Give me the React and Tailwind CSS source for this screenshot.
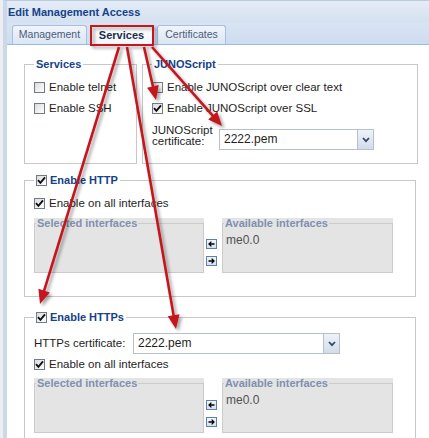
import React from "react";

function Check({ checked }) {
  return (
    <span className="w-[11px] h-[11px] shrink-0 border border-[#707b87] bg-gradient-to-br from-[#dcdcdc] to-white flex items-center justify-center">
      {checked && (
        <svg width="9" height="9" viewBox="0 0 9 9">
          <path d="M1 4.2 L3.4 6.8 L8 1.4" stroke="#111" strokeWidth="1.9" fill="none" />
        </svg>
      )}
    </span>
  );
}

function CheckRow({ checked, label }) {
  return (
    <div className="h-[21px] flex items-center gap-[4px]">
      <Check checked={checked} />
      <span className="text-[11.5px] text-[#1e1e1e] whitespace-nowrap">{label}</span>
    </div>
  );
}

function Select({ width, value }) {
  return (
    <div className={`flex h-[21px] border border-[#b5bfce] bg-white ${width}`}>
      <span className="flex-1 pl-[4px] text-[12px] leading-[19px] text-[#1e1e1e]">{value}</span>
      <span className="w-[16px] border-l border-[#b5bfce] bg-gradient-to-b from-[#eef3f9] to-[#d3dcea] flex items-center justify-center">
        <svg width="8" height="6" viewBox="0 0 8 6">
          <path d="M1 1 L4 4.2 L7 1" stroke="#2f4669" strokeWidth="1.7" fill="none" />
        </svg>
      </span>
    </div>
  );
}

function MoveButton({ dir }) {
  return (
    <span className="w-[11px] h-[10px] border border-[#5f7fae] bg-gradient-to-b from-[#f1f5fb] to-[#d5e1f0] flex items-center justify-center">
      <svg width="7" height="6" viewBox="0 0 7 6">
        {dir === "left" ? (
          <path d="M6.5 3 H1 M3.4 0.6 L1 3 L3.4 5.4" stroke="#000" strokeWidth="1.3" fill="none" />
        ) : (
          <path d="M0.5 3 H6 M3.6 0.6 L6 3 L3.6 5.4" stroke="#000" strokeWidth="1.3" fill="none" />
        )}
      </svg>
    </span>
  );
}

function IfaceBox({ title, items, width }) {
  return (
    <div className={`bg-[#e4e4e4] h-[55px] flex ${width}`}>
      <fieldset className="flex-1 min-w-0 border border-[#cbcbcb]">
        <legend className="ml-[1px] px-[1px] text-[11px] font-bold text-[#8091b0] leading-[11px] whitespace-nowrap">
          {title}
        </legend>
        {items.map((it) => (
          <div key={it} className="pl-[3px] pt-[4px] text-[12px] leading-[14px] text-[#505050]">
            {it}
          </div>
        ))}
      </fieldset>
    </div>
  );
}

function InterfacePicker({ padTop }) {
  return (
    <div className="flex">
      <IfaceBox title="Selected interfaces" items={[]} width="w-[170px]" />
      <div className={`ml-[2px] flex flex-col gap-[7px] ${padTop}`}>
        <MoveButton dir="left" />
        <MoveButton dir="right" />
      </div>
      <div className="ml-[5px]">
        <IfaceBox title="Available interfaces" items={["me0.0"]} width="w-[171px]" />
      </div>
    </div>
  );
}

function Legend({ children, checked }) {
  return (
    <legend className="ml-[9px] px-[2px] leading-[14px]">
      <span className="flex items-center gap-[3px]">
        {checked !== undefined && <Check checked={checked} />}
        <span className="text-[11px] font-bold text-[#15428b] whitespace-nowrap">{children}</span>
      </span>
    </legend>
  );
}

// Annotation arrows drawn on top of the dialog
const ARROWS = [
  [119, 47, 40, 304],
  [127, 47, 176, 329],
  [144, 47, 156, 100],
  [152, 47, 222, 126],
];

function Arrow({ x1, y1, x2, y2 }) {
  const dx = x2 - x1;
  const dy = y2 - y1;
  const len = Math.hypot(dx, dy);
  const ux = dx / len;
  const uy = dy / len;
  const hl = 14;
  const hw = 6;
  const bx = x2 - ux * hl;
  const by = y2 - uy * hl;
  const px = -uy;
  const py = ux;
  return (
    <g>
      <line x1={x1} y1={y1} x2={bx + ux * 2} y2={by + uy * 2} stroke="#c4161c" strokeWidth="2.6" />
      <polygon
        points={`${x2},${y2} ${bx + px * hw},${by + py * hw} ${bx - px * hw},${by - py * hw}`}
        fill="#c4161c"
      />
    </g>
  );
}

export default function App() {
  return (
    <div className="relative w-[429px] h-[438px] overflow-hidden flex bg-[#e6e9ee] font-['Liberation_Sans',Arial,sans-serif]">
      <div className="w-[3px] shrink-0 bg-[#eceef2]" />
      <div className="flex-1 min-h-0 flex flex-col border-l-4 border-[#cbd8ea] border-t border-t-[#bccbdf]">
        {/* title bar */}
        <div className="h-[22px] shrink-0 flex items-center pl-[1px] bg-gradient-to-b from-[#e4ecf7] to-[#d5e1f0]">
          <span className="text-[11px] font-bold text-[#15428b] whitespace-nowrap">Edit Management Access</span>
        </div>

        {/* tab strip */}
        <div className="h-[22px] shrink-0 flex items-end pl-[5px] bg-gradient-to-b from-[#d8e4f3] to-[#cddcef] border-b border-[#99bbe8]">
          <div className="w-[75px] h-[19px] mr-[3px] rounded-t-[3px] border border-b-0 border-[#a6bfe2] bg-gradient-to-b from-[#f1f5fb] to-[#dbe6f4] flex items-center justify-center">
            <span className="text-[10.5px] text-[#4a5d78]">Management</span>
          </div>
          <div className="w-[63px] h-[20px] mr-[4px] -mb-px rounded-t-[3px] border border-b-0 border-[#a6bfe2] bg-gradient-to-b from-white to-[#f2f6fb] flex items-center justify-center">
            <span className="text-[11px] font-bold text-[#1b2d4d]">Services</span>
          </div>
          <div className="w-[69px] h-[19px] rounded-t-[3px] border border-b-0 border-[#a6bfe2] bg-gradient-to-b from-[#f1f5fb] to-[#dbe6f4] flex items-center justify-center">
            <span className="text-[10.5px] text-[#4a5d78]">Certificates</span>
          </div>
        </div>

        {/* body */}
        <div className="flex-1 min-h-0 overflow-hidden bg-white pl-[17px] pt-[12px]">
          <div className="flex gap-[5px] items-stretch">
            <fieldset className="w-[113px] border border-[#c8c8c8]">
              <Legend>Services</Legend>
              <div className="pl-[9px] pt-[6px]">
                <CheckRow label="Enable telnet" />
                <CheckRow label="Enable SSH" />
              </div>
            </fieldset>
            <fieldset className="w-[276px] border border-[#c8c8c8]">
              <Legend>JUNOScript</Legend>
              <div className="pl-[9px] pt-[6px] pb-[13px]">
                <CheckRow label="Enable JUNOScript over clear text" />
                <CheckRow checked label="Enable JUNOScript over SSL" />
                <div className="mt-[6px] flex items-start">
                  <div className="w-[67px] text-[11.5px] leading-[11px] text-[#1e1e1e]">
                    JUNOScript
                    <br />
                    certificate:
                  </div>
                  <div className="mt-[4px]">
                    <Select width="w-[155px]" value="2222.pem" />
                  </div>
                </div>
              </div>
            </fieldset>
          </div>

          <fieldset className="mt-[9px] w-[392px] border border-[#c8c8c8]">
            <Legend checked>Enable HTTP</Legend>
            <div className="pl-[9px] pt-[6px] pb-[23px]">
              <CheckRow checked label="Enable on all interfaces" />
              <div className="mt-[4px]">
                <InterfacePicker padTop="pt-[21px]" />
              </div>
            </div>
          </fieldset>

          <fieldset className="mt-[13px] w-[392px] border border-[#c8c8c8]">
            <Legend checked>Enable HTTPs</Legend>
            <div className="pl-[9px] pt-[9px] pb-[20px]">
              <div className="h-[21px] flex items-center">
                <span className="w-[99px] text-[11.5px] text-[#1e1e1e] whitespace-nowrap">HTTPs certificate:</span>
                <Select width="w-[207px]" value="2222.pem" />
              </div>
              <CheckRow checked label="Enable on all interfaces" />
              <div className="mt-[3px]">
                <InterfacePicker padTop="pt-[22px]" />
              </div>
            </div>
          </fieldset>
        </div>
      </div>

      {/* callout overlay */}
      <svg className="absolute inset-0 pointer-events-none" width="429" height="438" viewBox="0 0 429 438">
        <defs>
          <filter id="callout-shadow" x="-20%" y="-20%" width="140%" height="140%">
            <feDropShadow dx="2.5" dy="2.5" stdDeviation="1.4" floodColor="#000" floodOpacity="0.35" />
          </filter>
        </defs>
        <g filter="url(#callout-shadow)">
          <rect x="91" y="26" width="62" height="19" fill="none" stroke="#c4161c" strokeWidth="2" />
          {ARROWS.map(([x1, y1, x2, y2], i) => (
            <Arrow key={i} x1={x1} y1={y1} x2={x2} y2={y2} />
          ))}
        </g>
      </svg>
    </div>
  );
}
